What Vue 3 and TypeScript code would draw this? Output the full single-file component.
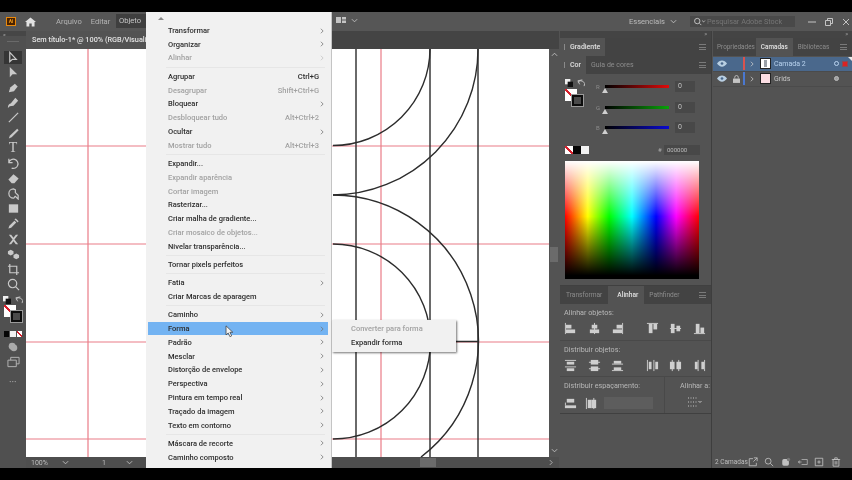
<template>
  <div class="screen">
    <div class="letterbox top-box"></div>
    <div class="app">
      <header class="menubar">
        <div class="ai-logo">Ai</div>
        <svg class="home" viewBox="0 0 12 10"><path d="M6 0 L12 5 H10.4 V10 H7.3 V6.6 H4.7 V10 H1.6 V5 H0 Z" /></svg>
        <span class="menu-label arquivo">Arquivo</span>
        <span class="menu-label">Editar</span>
        <span class="menu-label active">Objeto</span>
        <svg class="arrange" viewBox="0 0 10 6"><path d="M0 0h5v6H0zM6 0h4v2.5H6zM6 3.5h4V6H6z" /></svg>
        <svg class="chev arrange-chev" viewBox="0 0 8 5"><path d="M1 1l3 3 3-3" /></svg>
        <span class="menubar-spacer"></span>
        <span class="menu-label essenciais">Essenciais</span>
        <svg class="chev" viewBox="0 0 8 5"><path d="M1 1l3 3 3-3" /></svg>
        <div class="stock-search">
          <svg class="search-icon" viewBox="0 0 14 10"><circle cx="4.5" cy="4.5" r="3" /><path d="M7 7l2 2M10 4l1.5 1.5L13 4" /></svg>
          <span>Pesquisar Adobe Stock</span>
        </div>
        <svg class="win-btn min" viewBox="0 0 8 8"><path d="M0 4h8" /></svg>
        <svg class="win-btn" viewBox="0 0 8 8"><path d="M0.5 2.5h5v5h-5zM2.5 2.5V0.5h5v5h-2" /></svg>
        <svg class="win-btn" viewBox="0 0 8 8"><path d="M1 1l6 6M7 1L1 7" /></svg>
      </header>

      <div class="workspace">
        <aside class="toolbar">
          <div class="tool-head">&#171;</div>
          <div class="tool-grip"></div>
          <div v-for="(tool, i) in tools" :key="i" :class="['tool', { selected: i === 0 }]">
            <span v-if="tool.text" class="tool-t">{{ tool.text }}</span>
            <svg v-else viewBox="0 0 14 14">
              <path :d="tool.d" :class="{ outline: tool.line }" />
            </svg>
          </div>
          <div class="color-defaults">
            <svg viewBox="0 0 9 9"><rect x="0" y="0" width="6" height="6" fill="#eee" /><rect x="3" y="3" width="6" height="6" fill="#111" /></svg>
            <svg viewBox="0 0 9 9"><path d="M1 4a4 4 0 0 1 7 4M6 1L1 2l2 4" fill="none" stroke="#ccc" /></svg>
          </div>
          <div class="fill-stroke">
            <div class="fill-box"></div>
            <div class="stroke-box"></div>
          </div>
          <div class="mini-swatches">
            <i class="sw-black"></i><i class="sw-white"></i><i class="sw-none"></i>
          </div>
          <svg class="tool-extra mode" viewBox="0 0 14 14"><circle cx="6" cy="6" r="4" /><circle cx="8" cy="8" r="4" /></svg>
          <svg class="tool-extra screen-mode" viewBox="0 0 14 12"><path class="outline" d="M1 4h9v7H1zM4 4V1h9v7h-3" /></svg>
          <div class="tool-dots">&#8226;&#8226;&#8226;</div>
        </aside>

        <main class="center">
          <div class="doc-tabs">
            <div class="doc-tab">Sem título-1* @ 100% (RGB/Visualização GPU)</div>
          </div>
          <div class="canvas-row">
            <svg class="canvas" viewBox="26 49 523 408">
              <g stroke="#ea7c88" stroke-width="1.2" fill="none">
                <path d="M88 49V457M381 49V457" />
                <path d="M26 146H549M26 244H549M26 342H549M26 439H549" />
              </g>
              <g stroke="#2c2c2c" stroke-width="1.4" fill="none">
                <path d="M356 49V457M430 49V457M478 49V457" />
                <path d="M430 49A97 97 0 0 1 333 145.5" />
                <path d="M478 49A146 146 0 0 1 333 195" />
                <path d="M333 195A146 146 0 0 1 421 457" />
                <path d="M333 244A97.5 97.5 0 0 1 333 439" />
                <path d="M430 341.5H478" />
              </g>
            </svg>
            <div class="v-scroll">
              <svg class="chev" viewBox="0 0 8 5"><path d="M1 4l3-3 3 3" /></svg>
              <div class="v-thumb"></div>
              <svg class="chev" viewBox="0 0 8 5"><path d="M1 1l3 3 3-3" /></svg>
            </div>
          </div>
          <div class="statusbar">
            <span class="zoom-val">100%</span>
            <svg class="chev" viewBox="0 0 8 5"><path d="M1 1l3 3 3-3" /></svg>
            <span class="page-val">1</span>
            <svg class="chev" viewBox="0 0 8 5"><path d="M1 1l3 3 3-3" /></svg>
            <div class="h-thumb"></div>
            <svg class="chev right-chev" viewBox="0 0 5 8"><path d="M1 1l3 3-3 3" /></svg>
          </div>
        </main>

        <section class="panel-col">
          <div class="panel-strip"><span class="collapse">&#187;</span></div>
          <div class="tab-row">
            <span class="tab on grip">Gradiente</span>
            <span class="tab-menu"></span>
          </div>
          <div class="tab-row">
            <span class="tab on grip">Cor</span>
            <span class="tab dim">Guia de cores</span>
            <span class="tab-menu"></span>
          </div>
          <div class="color-panel">
            <div class="color-top">
              <div class="color-left">
                <div class="color-defaults small">
                  <svg viewBox="0 0 9 9"><rect x="0" y="0" width="6" height="6" fill="#eee" /><rect x="3" y="3" width="6" height="6" fill="#111" /></svg>
                  <svg viewBox="0 0 9 9"><path d="M1 4a4 4 0 0 1 7 4M6 1L1 2l2 4" fill="none" stroke="#ccc" /></svg>
                </div>
                <div class="fill-stroke">
                  <div class="fill-box"></div>
                  <div class="stroke-box"></div>
                </div>
              </div>
              <div class="sliders">
                <div v-for="s in sliders" :key="s.label" class="slider-row">
                  <span class="slider-label">{{ s.label }}</span>
                  <div class="track" :style="{ background: s.bg }">
                    <i class="thumb"></i>
                  </div>
                  <span class="value-box">0</span>
                </div>
              </div>
            </div>
            <div class="hex-row">
              <i class="sw-none big"></i><i class="sw-black big"></i><i class="sw-white big"></i>
              <span class="hash">#</span>
              <span class="hex-box">000000</span>
            </div>
            <div class="spectrum"></div>
          </div>

          <div class="tab-row align-tabs">
            <span class="tab dim">Transformar</span>
            <span class="tab on strong">Alinhar</span>
            <span class="tab dim">Pathfinder</span>
            <span class="tab-menu"></span>
          </div>
          <div class="align-panel">
            <div class="align-block">
              <div class="align-title">Alinhar objetos:</div>
              <div class="icon-row">
                <svg v-for="(ic, i) in alignIcons" :key="i" viewBox="0 0 14 14" :class="{ gap: i === 3 }">
                  <rect v-for="(r, j) in ic" :key="j" :x="r[0]" :y="r[1]" :width="r[2]" :height="r[3]" />
                </svg>
              </div>
            </div>
            <div class="align-block">
              <div class="align-title">Distribuir objetos:</div>
              <div class="icon-row">
                <svg v-for="(ic, i) in distIcons" :key="i" viewBox="0 0 14 14" :class="{ gap: i === 3 }">
                  <rect v-for="(r, j) in ic" :key="j" :x="r[0]" :y="r[1]" :width="r[2]" :height="r[3]" />
                </svg>
              </div>
            </div>
            <div class="align-last">
              <div class="spacing">
                <div class="align-title">Distribuir espaçamento:</div>
                <div class="icon-row tight">
                  <svg v-for="(ic, i) in spaceIcons" :key="i" viewBox="0 0 14 14">
                    <rect v-for="(r, j) in ic" :key="j" :x="r[0]" :y="r[1]" :width="r[2]" :height="r[3]" />
                  </svg>
                  <div class="space-input"></div>
                </div>
              </div>
              <div class="align-to">
                <div class="align-title">Alinhar a:</div>
                <svg class="align-grid" viewBox="0 0 14 10">
                  <path d="M0 1h9M0 5h9M0 9h9" stroke-dasharray="1 1.5" />
                  <path d="M10.5 4l1.5 1.5L13.5 4" />
                </svg>
              </div>
            </div>
          </div>
        </section>

        <section class="layers-col">
          <div class="panel-strip"><span class="collapse">&#187;</span></div>
          <div class="tab-row layer-tabs">
            <span class="tab dim">Propriedades</span>
            <span class="tab on">Camadas</span>
            <span class="tab dim">Bibliotecas</span>
            <span class="tab-menu"></span>
          </div>
          <div class="layer-list">
            <div v-for="l in layers" :key="l.name" :class="['layer', { current: l.current }]">
              <svg class="eye" viewBox="0 0 12 8"><path d="M0 4c3-5 9-5 12 0-3 5-9 5-12 0z" /><circle cx="6" cy="4" r="1.6" class="pupil" /></svg>
              <span class="lock-cell">
                <svg v-if="l.locked" viewBox="0 0 8 9"><path d="M0 4h8v5H0z" /><path class="outline" d="M2 4V2.5a2 2 0 0 1 4 0V4" /></svg>
              </span>
              <i class="layer-bar" :style="{ background: l.color }"></i>
              <svg class="layer-chev" viewBox="0 0 5 8"><path d="M1 1l3 3-3 3" /></svg>
              <span :class="['layer-thumb', { grid: l.locked }]"></span>
              <span class="layer-name">{{ l.name }}</span>
              <i :class="['target', { filled: l.locked }]"></i>
              <i class="sel-mark" :class="{ show: l.current }"></i>
            </div>
          </div>
          <footer class="layers-foot">
            <span class="count">2 Camadas</span>
            <svg viewBox="0 0 12 12"><path class="outline" d="M6 2H1.5v8.5H10V7M7 1h4v4M11 1L6.500 5.500" /></svg>
            <svg viewBox="0 0 12 12"><circle class="outline" cx="5" cy="5" r="3.500" /><path class="outline" d="M7.500 7.500L11 11" /></svg>
            <svg viewBox="0 0 12 12"><rect x="1.500" y="2.500" width="8" height="8" rx="2" /><circle cx="9" cy="3" r="2" fill="#777" /></svg>
            <svg viewBox="0 0 14 12"><path class="outline" d="M5 2.500h8v7H5M5 6H0M3 4L0.500 6 3 8" /></svg>
            <svg viewBox="0 0 12 12"><path class="outline" d="M1.500 1.500h9v9h-9zM6 4v4M4 6h4" /></svg>
            <svg viewBox="0 0 12 12"><path class="outline" d="M2.500 3h7v8h-7zM1 3h10M4.500 3V1h3v2M5 5v4M7 5v4" /></svg>
          </footer>
        </section>
      </div>

      <div class="object-menu">
        <svg class="menu-caret" viewBox="0 0 8 5"><path d="M0 5l4-4 4 4z" /></svg>
        <template v-for="(group, g) in menu" :key="g">
          <div v-if="g > 0" class="menu-sep"></div>
          <div
            v-for="item in group"
            :key="item.label"
            :class="['menu-item', { off: item.off, hot: item.label === 'Forma' }]"
          >
            <span>{{ item.label }}</span>
            <span v-if="item.keys" class="keys">{{ item.keys }}</span>
            <svg v-if="item.sub" class="sub-arrow" viewBox="0 0 5 8"><path d="M1 1l3 3-3 3" /></svg>
          </div>
        </template>
      </div>

      <div class="flyout">
        <div class="fly-item off">Converter para forma</div>
        <div class="fly-item">Expandir forma</div>
      </div>

      <svg class="cursor" viewBox="0 0 10 15">
        <path d="M1 1v10.500l2.500-2.300 2 4.300 2-1-2-4.100h3.300z" />
      </svg>
    </div>
    <div class="letterbox bottom-box"></div>
  </div>
</template>

<script setup lang="ts">
interface MenuItem {
  label: string
  off?: boolean
  sub?: boolean
  keys?: string
}

interface Tool {
  d?: string
  line?: boolean
  text?: string
}

const menu: MenuItem[][] = [
  [
    { label: 'Transformar', sub: true },
    { label: 'Organizar', sub: true },
    { label: 'Alinhar', sub: true, off: true }
  ],
  [
    { label: 'Agrupar', keys: 'Ctrl+G' },
    { label: 'Desagrupar', keys: 'Shift+Ctrl+G', off: true },
    { label: 'Bloquear', sub: true },
    { label: 'Desbloquear tudo', keys: 'Alt+Ctrl+2', off: true },
    { label: 'Ocultar', sub: true },
    { label: 'Mostrar tudo', keys: 'Alt+Ctrl+3', off: true }
  ],
  [
    { label: 'Expandir...' },
    { label: 'Expandir aparência', off: true },
    { label: 'Cortar imagem', off: true },
    { label: 'Rasterizar...' },
    { label: 'Criar malha de gradiente...' },
    { label: 'Criar mosaico de objetos...', off: true },
    { label: 'Nivelar transparência...' }
  ],
  [{ label: 'Tornar pixels perfeitos' }],
  [
    { label: 'Fatia', sub: true },
    { label: 'Criar Marcas de aparagem' }
  ],
  [
    { label: 'Caminho', sub: true },
    { label: 'Forma', sub: true },
    { label: 'Padrão', sub: true },
    { label: 'Mesclar', sub: true },
    { label: 'Distorção de envelope', sub: true },
    { label: 'Perspectiva', sub: true },
    { label: 'Pintura em tempo real', sub: true },
    { label: 'Traçado da imagem', sub: true },
    { label: 'Texto em contorno', sub: true }
  ],
  [
    { label: 'Máscara de recorte', sub: true },
    { label: 'Caminho composto', sub: true }
  ]
]

const tools: Tool[] = [
  { d: 'M3 1.500v10l2.800-2.500h4.200z', line: true },
  { d: 'M3 1v11l3-3h5z' },
  { d: 'M2 12l1.500-5 5-4 3 3-4 5z' },
  { d: 'M1 13c0-4 2-5 3-5l5-6 3 3-5 5.500-4 .500z' },
  { d: 'M2 12L12 2', line: true },
  { d: 'M2 12.500l1-3L11 2l1.500 1.500L5 11z' },
  { text: 'T' },
  { d: 'M2 6a5 5 0 1 1 3 6M2 2v4h4', line: true },
  { d: 'M1.500 8L7 2.500 12.500 7 8 12H5z' },
  { d: 'M7 2a5 5 0 1 0 0 10c1 0 1-2 2-2l3 3V9L9 6V3z', line: true },
  { d: 'M2 2.500h10v9H2z' },
  { d: 'M1.500 12.500l1-3L8 4l2 2-5.500 5.500zM8 2.500l1.500-1 3 3-1 1.500z' },
  { d: 'M2 2l4 5-4 5h2.500L7 9l2.500 3H12L8 7l4-5H9.500L7 5 4.500 2z' },
  { d: 'M1 3.500l3-1.500 3 1.500v3l-3 1.500-3-1.500zM7 7.500l3-1.500 3 1.500v3l-3 1.500-3-1.500z' },
  { d: 'M3 1v9.500h10M1 3.500h9.500V13', line: true },
  { d: 'M6 1.500a4.500 4.500 0 1 0 0 9 4.500 4.500 0 0 0 0-9zM9.500 9.500L13 13', line: true }
]

const sliders = [
  { label: 'R', bg: 'linear-gradient(90deg, #000, #e00b0b)' },
  { label: 'G', bg: 'linear-gradient(90deg, #000, #09a309)' },
  { label: 'B', bg: 'linear-gradient(90deg, #000, #0a0ad0)' }
]

const alignIcons: number[][][] = [
  [[1, 1, 1, 12], [2, 3, 6, 4], [2, 8, 10, 4]],
  [[6.5, 1, 1, 12], [4, 3, 6, 4], [2, 8, 10, 4]],
  [[12, 1, 1, 12], [6, 3, 6, 4], [2, 8, 10, 4]],
  [[1, 1, 12, 1], [3, 2, 4, 10], [8, 2, 4, 6]],
  [[1, 6.5, 12, 1], [2, 2, 4, 10], [8, 4, 4, 6]],
  [[1, 12, 12, 1], [3, 2, 4, 10], [8, 6, 4, 6]]
]

const distIcons: number[][][] = [
  [[1, 1, 12, 1], [3, 3, 8, 3], [1, 8, 12, 1], [3, 10, 8, 3]],
  [[1, 3, 12, 1], [3, 1, 8, 5], [1, 10, 12, 1], [3, 8, 8, 5]],
  [[1, 5, 12, 1], [3, 2, 8, 3], [1, 12, 12, 1], [3, 9, 8, 3]],
  [[1, 1, 1, 12], [3, 3, 3, 8], [8, 1, 1, 12], [10, 3, 3, 8]],
  [[3, 1, 1, 12], [1, 3, 5, 8], [10, 1, 1, 12], [8, 3, 5, 8]],
  [[5, 1, 1, 12], [2, 3, 3, 8], [12, 1, 1, 12], [9, 3, 3, 8]]
]

const spaceIcons: number[][][] = [
  [[1, 6, 1, 3], [3, 2, 8, 4], [1, 9, 12, 3]],
  [[1, 1, 1, 12], [3, 3, 4, 9], [9, 1, 1, 12], [7, 3, 5, 9]]
]

const layers = [
  { name: 'Camada 2', color: '#d9534f', current: true, locked: false },
  { name: 'Grids', color: '#4a78d0', current: false, locked: true }
]
</script>

<style>
html,
body {
  margin: 0;
  background: #000;
}
</style>

<style scoped>
* {
  box-sizing: border-box;
}

.screen {
  width: 852px;
  height: 480px;
  display: flex;
  flex-direction: column;
  background: #000;
  overflow: hidden;
  font-family: Roboto, "Liberation Sans", sans-serif;
  filter: blur(0.4px);
}

.letterbox {
  background: #000;
  flex-shrink: 0;
}

.top-box {
  height: 12px;
}

.bottom-box {
  height: 12px;
}

.app {
  position: relative;
  flex: 1;
  min-height: 0;
  display: flex;
  flex-direction: column;
  background: #535353;
}

svg {
  display: block;
}

.menubar {
  height: 19px;
  flex-shrink: 0;
  display: flex;
  align-items: center;
  background: #565656;
  padding: 0 2px 0 6px;
  color: #b4b4b4;
  font-size: 7.600px;
}

.ai-logo {
  width: 10px;
  height: 9px;
  background: #4a2200;
  border: 1px solid #e8890c;
  color: #f09a1a;
  font-size: 5px;
  font-weight: 700;
  line-height: 7px;
  text-align: center;
}

.home {
  width: 11px;
  height: 10px;
  margin-left: 9px;
  fill: #e2e2e2;
}

.menu-label {
  padding: 0 3px;
  white-space: nowrap;
}

.arquivo {
  margin-left: 17px;
  margin-right: 3px;
}

.menu-label.active {
  position: absolute;
  left: 116px;
  top: 2px;
  width: 30px;
  height: 14px;
  line-height: 14px;
  background: #3f3f3f;
  color: #c8c8c8;
}

.arrange {
  position: absolute;
  left: 336px;
  top: 5px;
  width: 10px;
  height: 6px;
  fill: #c4c4c4;
}

.chev {
  width: 7px;
  height: 5px;
  fill: none;
  stroke: #c4c4c4;
  stroke-width: 1;
  flex-shrink: 0;
}

.arrange-chev {
  position: absolute;
  left: 351px;
  top: 6px;
}

.menubar-spacer {
  flex: 1;
}

.essenciais {
  color: #bcbcbc;
  margin-right: 2px;
}

.stock-search {
  width: 105px;
  height: 11px;
  margin: 0 4px 0 13px;
  background: #494949;
  display: flex;
  align-items: center;
  padding-left: 3px;
  color: #767676;
  font-size: 7.300px;
}

.search-icon {
  width: 13px;
  height: 9px;
  fill: none;
  stroke: #c8c8c8;
  margin-right: 1px;
}

.win-btn {
  width: 8px;
  height: 8px;
  fill: none;
  stroke: #c4c4c4;
  margin-left: 9px;
}

.workspace {
  flex: 1;
  min-height: 0;
  display: flex;
}

.toolbar {
  width: 26px;
  flex-shrink: 0;
  display: flex;
  flex-direction: column;
  align-items: center;
  background: #505050;
}

.tool-head {
  width: 100%;
  height: 5px;
  background: #464646;
  color: #aaa;
  font-size: 6px;
  line-height: 5px;
  padding-left: 3px;
}

.tool-grip {
  width: 12px;
  height: 1px;
  margin: 5px 0 8px;
  background: #6a6a6a;
}

.tool {
  width: 18px;
  height: 15.15px;
  flex-shrink: 0;
  display: flex;
  align-items: center;
  justify-content: center;
  color: #cdcdcd;
}

.tool svg {
  width: 13px;
  height: 13px;
  fill: #c9c9c9;
}

.tool .outline {
  fill: none;
  stroke: #c9c9c9;
  stroke-width: 1.300;
}

.tool.selected {
  background: #353535;
  height: 13px;
  margin: 1px 0;
}

.tool-t {
  font-family: "Liberation Serif", serif;
  font-size: 14px;
  line-height: 14px;
}

.color-defaults {
  width: 20px;
  display: flex;
  justify-content: space-between;
  margin-top: 4px;
}

.color-defaults svg {
  width: 8px;
  height: 8px;
}

.fill-stroke {
  position: relative;
  width: 18px;
  height: 17px;
  margin-top: 1px;
  flex-shrink: 0;
}

.fill-box {
  position: absolute;
  left: 0;
  top: 0;
  width: 12px;
  height: 12px;
  background: linear-gradient(to top right, #fff 44%, #d8202c 44%, #d8202c 56%, #fff 56%);
}

.stroke-box {
  position: absolute;
  right: 0;
  bottom: 0;
  width: 11px;
  height: 11px;
  background: #4a4a4a;
  border: 2px solid #0c0c0c;
  outline: 1px solid #9a9a9a;
  outline-offset: 0;
}

.mini-swatches {
  display: flex;
  gap: 1px;
  margin-top: 9px;
}

.mini-swatches i {
  display: block;
  width: 5.500px;
  height: 6px;
}

.hex-row i {
  display: block;
}

.sw-black {
  background: #050505;
}

.sw-white {
  background: #f2f2f2;
}

.sw-none {
  background: linear-gradient(to top right, #fff 40%, #d8202c 40%, #d8202c 60%, #fff 60%);
}

.tool-extra {
  width: 12px;
  height: 12px;
  fill: #aaa;
}

.tool-extra .outline {
  fill: none;
  stroke: #b8b8b8;
}

.mode {
  margin-top: 4px;
}

.screen-mode {
  margin-top: 3px;
  width: 13px;
}

.tool-dots {
  color: #a8a8a8;
  font-size: 6px;
  letter-spacing: 0.5px;
  margin-top: 10px;
}

.center {
  width: 533px;
  flex-shrink: 0;
  display: flex;
  flex-direction: column;
}

.doc-tabs {
  height: 18px;
  flex-shrink: 0;
  background: #444;
}

.doc-tab {
  width: 120px;
  height: 100%;
  padding-left: 6px;
  background: #535353;
  color: #e2e2e2;
  font-size: 7.300px;
  font-weight: 500;
  line-height: 18px;
  white-space: nowrap;
  overflow: hidden;
}

.canvas-row {
  flex: 1;
  min-height: 0;
  display: flex;
}

.canvas {
  width: 523px;
  height: 408px;
  background: #fff;
  flex-shrink: 0;
}

.v-scroll {
  flex: 1;
  display: flex;
  flex-direction: column;
  align-items: center;
  padding: 3px 0;
}

.v-thumb {
  width: 8px;
  height: 15px;
  margin: 190px 0 186px;
  background: #6b6b6b;
}

.statusbar {
  height: 11px;
  flex-shrink: 0;
  display: flex;
  align-items: center;
  background: #4e4e4e;
  padding-left: 5px;
  color: #bdbdbd;
  font-size: 7px;
}

.zoom-val {
  width: 31px;
}

.page-val {
  margin-left: 33px;
  width: 24px;
}

.h-thumb {
  width: 16px;
  height: 9px;
  margin-left: 287px;
  background: #6b6b6b;
}

.right-chev {
  width: 4px;
  height: 7px;
  margin-left: 113px;
}

.panel-col {
  width: 152px;
  flex-shrink: 0;
  margin-left: 1px;
  display: flex;
  flex-direction: column;
  border-right: 1px solid #3e3e3e;
}

.layers-col {
  flex: 1;
  min-width: 0;
  margin-left: 1px;
  display: flex;
  flex-direction: column;
}

.panel-strip {
  height: 7px;
  background: #444;
  flex-shrink: 0;
  position: relative;
}

.collapse {
  position: absolute;
  right: 4px;
  top: 0;
  color: #aaa;
  font-size: 6px;
  line-height: 6px;
}

.tab-row {
  height: 18px;
  flex-shrink: 0;
  background: #434343;
  display: flex;
  align-items: stretch;
  position: relative;
  font-size: 7px;
  color: #a6a6a6;
}

.tab {
  padding: 0 5px;
  line-height: 18px;
  white-space: nowrap;
}

.tab.on {
  background: #535353;
  color: #e0e0e0;
  font-weight: 500;
}

.tab.grip {
  padding-left: 10px;
  position: relative;
}

.tab.grip::before {
  content: "";
  position: absolute;
  left: 4px;
  top: 6px;
  width: 1px;
  height: 6px;
  background: #8a8a8a;
}

.tab.dim {
  color: #8d8d8d;
}

.tab-menu {
  position: absolute;
  right: 5px;
  top: 6px;
  width: 7px;
  height: 6px;
  border-top: 1px solid #7a7a7a;
  border-bottom: 1px solid #7a7a7a;
  background: linear-gradient(#7a7a7a, #7a7a7a) center / 100% 1px no-repeat;
}

.color-panel {
  height: 212px;
  flex-shrink: 0;
  padding: 5px 5px 0;
  border-bottom: 1px solid #404040;
}

.color-top {
  display: flex;
  height: 65px;
}

.color-left {
  width: 20px;
  flex-shrink: 0;
}

.color-left .fill-stroke {
  margin-top: 2px;
}

.color-defaults.small {
  margin-top: 0;
}

.sliders {
  flex: 1;
  display: flex;
  flex-direction: column;
  gap: 9.500px;
  padding: 2px 0 0 11px;
}

.slider-row {
  display: flex;
  align-items: center;
  height: 11px;
  font-size: 6px;
  color: #8c8c8c;
}

.slider-label {
  width: 9px;
  flex-shrink: 0;
}

.track {
  position: relative;
  width: 64px;
  height: 3px;
  flex-shrink: 0;
}

.thumb {
  position: absolute;
  left: -3px;
  top: 3px;
  width: 0;
  height: 0;
  border-left: 3px solid transparent;
  border-right: 3px solid transparent;
  border-bottom: 5px solid #d0d0d0;
}

.value-box {
  width: 20px;
  height: 11px;
  margin-left: 6px;
  padding-left: 3px;
  background: #484848;
  color: #c4c4c4;
  font-size: 7px;
  line-height: 11px;
}

.hex-row {
  display: flex;
  align-items: center;
  height: 11px;
}

.hex-row i.big {
  width: 8px;
  height: 8px;
}

.hash {
  margin-left: 69px;
  width: 6px;
  color: #aaa;
  font-size: 6px;
}

.hex-box {
  width: 36px;
  height: 10px;
  background: #484848;
  color: #bcbcbc;
  font-size: 6px;
  line-height: 10px;
  padding-left: 3px;
}

.spectrum {
  width: 134px;
  height: 118px;
  margin-top: 6px;
  background:
    linear-gradient(to bottom, #fff 0, rgba(255, 255, 255, 0) 47%, rgba(0, 0, 0, 0) 47%, #000 97%),
    linear-gradient(to right, #f00, #ff0 17%, #0f0 33%, #0ff 50%, #00f 68%, #f0f 83%, #f00);
}

.align-tabs {
  font-size: 6.600px;
}

.align-tabs .tab:first-child {
  padding: 0 6px;
}

.align-tabs .tab.strong {
  padding: 0 6px 0 9px;
}

.align-panel {
  height: 110px;
  flex-shrink: 0;
  border-bottom: 1px solid #404040;
}

.align-block {
  height: 36.500px;
  padding: 4px 4px 0;
  border-bottom: 1px solid #494949;
}

.align-title {
  color: #b8b8b8;
  font-size: 7.200px;
  line-height: 9px;
  white-space: nowrap;
}

.icon-row {
  display: flex;
  margin-top: 5px;
  gap: 10.500px;
}

.icon-row svg {
  width: 13px;
  height: 13px;
  fill: #cfcfcf;
  flex-shrink: 0;
}

.icon-row svg.gap {
  margin-left: 11px;
}

.icon-row.tight {
  gap: 8px;
  margin-top: 7px;
}

.space-input {
  width: 49px;
  height: 12px;
  background: #5d5d5d;
  margin-left: -2px;
}

.align-last {
  display: flex;
  height: 36px;
}

.spacing {
  width: 105px;
  padding: 4px 4px 0;
  border-right: 1px solid #494949;
}

.align-to {
  padding: 4px 0 0 15px;
}

.align-grid {
  width: 14px;
  height: 10px;
  margin: 7px 0 0 8px;
  fill: none;
  stroke: #c4c4c4;
}

.layer-tabs {
  font-size: 6.400px;
}

.layer-tabs .tab:first-child {
  padding: 0 1px 0 4px;
}

.layer-list {
  flex: 1;
  min-height: 0;
  padding-top: 1px;
  background: #535353;
}

.layer {
  position: relative;
  height: 14.800px;
  display: flex;
  align-items: center;
  padding-left: 4px;
  font-size: 7px;
  color: #c8c8c8;
  border-bottom: 1px solid #4b4b4b;
}

.layer.current {
  background: #4a688c;
  color: #b9d3ef;
}

.layer.current::after {
  content: "";
  position: absolute;
  right: 0;
  top: 0;
  border-top: 4px solid #e8e8e8;
  border-left: 4px solid transparent;
}

.eye {
  width: 10px;
  height: 7px;
  fill: #b9cfe2;
  flex-shrink: 0;
}

.eye .pupil {
  fill: #4a688c;
}

.lock-cell {
  width: 13px;
  padding-left: 5px;
  margin-left: 1px;
  flex-shrink: 0;
}

.lock-cell svg {
  width: 7px;
  height: 8px;
  fill: #c4c4c4;
}

.lock-cell .outline {
  fill: none;
  stroke: #c4c4c4;
}

.layer-bar {
  width: 2px;
  height: 13px;
  margin-left: 2px;
  flex-shrink: 0;
}

.layer-chev {
  width: 4px;
  height: 6px;
  margin-left: 5px;
  fill: none;
  stroke: #d0d0d0;
  flex-shrink: 0;
}

.layer-thumb {
  width: 11px;
  height: 11px;
  margin-left: 6px;
  background: linear-gradient(#9aa0a8, #9aa0a8) center / 3px 7px no-repeat, #fff;
  border: 1px solid #222;
  flex-shrink: 0;
}

.layer-thumb.grid {
  background: #fbdde3;
}

.layer-name {
  margin-left: 3px;
  flex: 1;
}

.target {
  width: 5px;
  height: 5px;
  border: 1px solid #b9d3ef;
  border-radius: 50%;
  margin-right: 4px;
  flex-shrink: 0;
}

.target.filled {
  background: #a0a0a0;
  border-color: #bcbcbc;
}

.sel-mark {
  width: 4px;
  height: 4px;
  margin-right: 5px;
  flex-shrink: 0;
}

.sel-mark.show {
  background: #d22;
  outline: 1px solid #8b4a55;
}

.layers-foot {
  height: 12px;
  flex-shrink: 0;
  display: flex;
  align-items: center;
  gap: 6.700px;
  padding-left: 2px;
  color: #bdbdbd;
  font-size: 6.500px;
}

.count {
  width: 26px;
  white-space: nowrap;
}

.layers-foot svg {
  width: 10px;
  height: 10px;
  fill: #c0c0c0;
  flex-shrink: 0;
}

.layers-foot .outline {
  fill: none;
  stroke: #c0c0c0;
}

.object-menu {
  position: absolute;
  left: 146px;
  top: 0;
  width: 186px;
  height: 456px;
  padding: 11.500px 3px 0 2px;
  background: #f1f1f1;
  border-right: 1px solid #c4c4c4;
  overflow: hidden;
  font-size: 7.500px;
  font-weight: 500;
  color: #2e2e2e;
}

.menu-caret {
  position: absolute;
  left: 12px;
  top: 4px;
  width: 6px;
  height: 4px;
  fill: #888;
}

.menu-item {
  position: relative;
  height: 13.800px;
  display: flex;
  align-items: center;
  justify-content: space-between;
  padding: 0 9px 0 20px;
  white-space: nowrap;
}

.menu-item.off {
  color: #a2a2a2;
}

.menu-item.hot {
  background: #73b3f2;
}

.sub-arrow {
  position: absolute;
  right: 4px;
  top: 4px;
  width: 4px;
  height: 6px;
  fill: none;
  stroke: #707070;
}

.menu-item.off .sub-arrow {
  stroke: #c0c0c0;
}

.menu-sep {
  height: 4.450px;
  position: relative;
}

.menu-sep::after {
  content: "";
  position: absolute;
  left: 18px;
  right: 3px;
  top: 2px;
  height: 1px;
  background: #e6e6e6;
}

.flyout {
  position: absolute;
  left: 332px;
  top: 308px;
  width: 124px;
  height: 32px;
  padding-top: 2px;
  background: #f1f1f1;
  box-shadow: 1px 1px 2px rgba(0, 0, 0, 0.55);
  font-size: 7.500px;
  font-weight: 500;
  color: #2e2e2e;
}

.fly-item {
  height: 14px;
  line-height: 14px;
  padding-left: 19px;
  white-space: nowrap;
}

.fly-item.off {
  color: #a2a2a2;
}

.cursor {
  position: absolute;
  left: 225px;
  top: 313px;
  width: 9px;
  height: 13px;
  fill: #f4f4f4;
  stroke: #333;
  stroke-width: 0.800;
}
</style>
